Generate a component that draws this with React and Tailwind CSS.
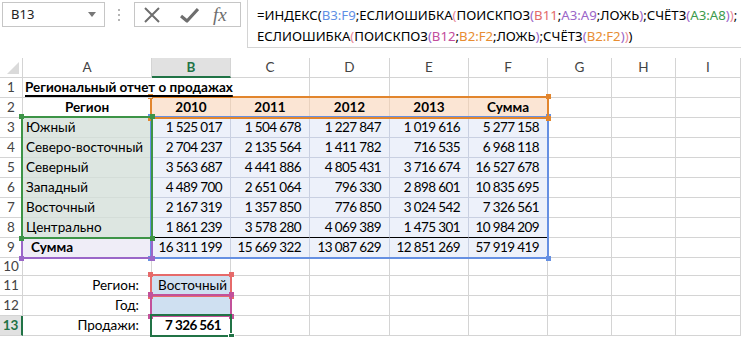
import React from "react";

// Excel 2013 style sheet with a formula being edited

const years = ["2010", "2011", "2012", "2013", "Сумма"];
const data = [
  ["Южный", "1 525 017", "1 504 678", "1 227 847", "1 019 616", "5 277 158"],
  ["Северо-восточный", "2 704 237", "2 135 564", "1 411 782", "716 535", "6 968 118"],
  ["Северный", "3 563 687", "4 441 886", "4 805 431", "3 716 674", "16 527 678"],
  ["Западный", "4 489 700", "2 651 064", "796 330", "2 898 601", "10 835 695"],
  ["Восточный", "2 167 319", "1 357 850", "776 850", "3 024 542", "7 326 561"],
  ["Центрально", "1 861 239", "3 578 280", "4 069 389", "1 475 301", "10 984 209"],
];
const totals = ["16 311 199", "15 669 322", "13 087 629", "12 851 269", "57 919 419"];
const letters = ["A", "B", "C", "D", "E", "F", "G", "H", "I"];

const grid = "border-r border-b border-[#d4d4d4]";

function Cell({ children, className = "" }) {
  return (
    <div className={`flex items-center whitespace-nowrap ${className}`}>{children}</div>
  );
}

function RowHead({ n, active }) {
  if (active)
    return (
      <div className="flex items-center justify-center border-b border-[#d4d4d4] border-r-2 border-r-[#217346] bg-[#e1e1e1] font-bold text-[#217346]">
        {n}
      </div>
    );
  return (
    <div className={`flex items-center justify-center ${grid} text-[#444]`}>{n}</div>
  );
}

function Empty({ n = 3 }) {
  return Array.from({ length: n }).map((_, i) => <Cell key={i} className={grid} />);
}

function Handles({ color }) {
  return (
    <>
      <span className={`absolute -left-[4px] -top-[4px] h-[5px] w-[5px] ${color}`} />
      <span className={`absolute -right-[4px] -top-[4px] h-[5px] w-[5px] ${color}`} />
      <span className={`absolute -left-[4px] -bottom-[4px] h-[5px] w-[5px] ${color}`} />
      <span className={`absolute -right-[4px] -bottom-[4px] h-[5px] w-[5px] ${color}`} />
    </>
  );
}

function Formula() {
  const k = "text-black";
  const P = ({ c, t }) => <span className={c}>{t}</span>;
  const blue = "text-[#5f8fe4]";
  const red = "text-[#e36a6a]";
  const purple = "text-[#9a66c8]";
  const green = "text-[#3b9a4b]";
  const mag = "text-[#c24d9c]";
  const orange = "text-[#e88d32]";
  const pink = "text-[#e8899a]";
  return (
    <div className="font-['Noto_Sans',sans-serif] text-[13.2px] leading-[21px] text-black">
      <div>
        <P c={k} t="=ИНДЕКС(" />
        <P c={blue} t="B3:F9" />
        <P c={k} t=";ЕСЛИОШИБКА" />
        <P c={pink} t="(" />
        <P c={k} t="ПОИСКПОЗ" />
        <P c={purple} t="(" />
        <P c={red} t="B11" />
        <P c={k} t=";" />
        <P c={purple} t="A3:A9" />
        <P c={k} t=";ЛОЖЬ" />
        <P c={purple} t=")" />
        <P c={k} t=";СЧЁТЗ" />
        <P c={purple} t="(" />
        <P c={green} t="A3:A8" />
        <P c={purple} t=")" />
        <P c={pink} t=")" />
        <P c={k} t=";" />
      </div>
      <div>
        <P c={k} t="ЕСЛИОШИБКА" />
        <P c={pink} t="(" />
        <P c={k} t="ПОИСКПОЗ" />
        <P c={purple} t="(" />
        <P c={mag} t="B12" />
        <P c={k} t=";" />
        <P c={orange} t="B2:F2" />
        <P c={k} t=";ЛОЖЬ" />
        <P c={purple} t=")" />
        <P c={k} t=";СЧЁТЗ" />
        <P c={purple} t="(" />
        <P c={orange} t="B2:F2" />
        <P c={purple} t=")" />
        <P c={pink} t=")" />
        <P c={k} t=")" />
      </div>
    </div>
  );
}

export default function App() {
  const num = "justify-end pr-[8px] tracking-[-0.6px]";
  const blueCell = "border-r border-b border-[#c9d0e1] bg-[#edf1fa]";
  return (
    <div className="h-[337px] w-[741px] overflow-hidden bg-white font-['Lato',sans-serif] text-[13.5px] text-black">
      {/* formula bar */}
      <div className="flex h-[58px] items-start">
        <div className="ml-[2px] mt-[2px] flex h-[25px] w-[103px] items-center justify-between border border-[#c6c6c6] pl-[8px] pr-[8px] font-['Noto_Sans',sans-serif] text-[13px] text-[#222]">
          B13
          <svg width="8" height="5" viewBox="0 0 8 5">
            <path d="M0 0h8L4 5z" fill="#777" />
          </svg>
        </div>
        <div className="ml-[13px] mt-[9px] flex flex-col gap-[3px]">
          <span className="h-[2px] w-[2px] bg-[#b5b5b5]" />
          <span className="h-[2px] w-[2px] bg-[#b5b5b5]" />
          <span className="h-[2px] w-[2px] bg-[#b5b5b5]" />
        </div>
        <div className="ml-[14px] mt-[2px] flex h-[25px] w-[107px] items-center border border-[#c6c6c6] pl-[8px]">
          <svg width="18" height="16" viewBox="0 0 18 16">
            <path d="M2 1l14 14M16 1L2 15" stroke="#6e6e6e" strokeWidth="2" />
          </svg>
          <svg className="ml-[19px]" width="19" height="16" viewBox="0 0 19 16">
            <path d="M1 9l6 5L18 2" stroke="#6e6e6e" strokeWidth="3.2" fill="none" strokeLinejoin="round" />
          </svg>
          <span className="ml-[14px] font-['Liberation_Serif',serif] text-[19px] italic leading-none text-[#6e6e6e]">
            fx
          </span>
        </div>
        <div className="ml-[6px] h-[48px] flex-1 border-b border-l border-[#d4d4d4] pl-[9px] pt-[5px]">
          <Formula />
        </div>
      </div>

      {/* sheet */}
      <div className="relative grid grid-cols-[23px_129px_79px_79px_80px_79px_79px_64px_64px_65px] grid-rows-[repeat(10,20px)_18px_repeat(3,20px)]">
        {/* column headers */}
        <div className={`relative ${grid}`}>
          <svg className="absolute bottom-[3px] right-[3px]" width="12" height="12" viewBox="0 0 12 12">
            <path d="M12 0v12H0z" fill="#dadada" />
          </svg>
        </div>
        {letters.map((l) =>
          l === "B" ? (
            <div
              key={l}
              className="flex items-center justify-center border-r border-[#d4d4d4] border-b-2 border-b-[#217346] bg-[#e1e1e1] font-bold text-[#217346]"
            >
              {l}
            </div>
          ) : (
            <div key={l} className={`flex items-center justify-center ${grid} text-[#444]`}>
              {l}
            </div>
          )
        )}

        {/* row 1 */}
        <RowHead n={1} />
        <Cell className="relative z-10 border-b border-[#d4d4d4] pl-[2px] font-bold underline decoration-[1.5px] underline-offset-[3px]">
          Региональный отчет о продажах
        </Cell>
        <Cell className="border-b border-[#d4d4d4]" />
        <Empty n={7} />

        {/* row 2 */}
        <RowHead n={2} />
        <Cell className={`justify-center font-bold ${grid}`}>Регион</Cell>
        {years.map((y) => (
          <Cell key={y} className="justify-center border-r border-b border-[#e9d2bf] bg-[#fbe5d4] font-bold">
            {y}
          </Cell>
        ))}
        <Empty n={3} />

        {/* rows 3-8 */}
        {data.map((r, i) => (
          <React.Fragment key={r[0]}>
            <RowHead n={i + 3} />
            <Cell className="border-r border-b border-[#d4ddd8] bg-[#dde6e1] pl-[3px]">{r[0]}</Cell>
            {r.slice(1).map((v, j) => (
              <Cell
                key={j}
                className={
                  i === 5
                    ? `${num} border-r border-b border-[#c9d0e1] border-b-black bg-[#edf1fa]`
                    : `${num} ${blueCell}`
                }
              >
                {v}
              </Cell>
            ))}
            <Empty n={3} />
          </React.Fragment>
        ))}

        {/* row 9 */}
        <RowHead n={9} />
        <Cell className="border-r border-b border-[#d6d3e4] bg-[#efedf7] pl-[8px] font-bold">Сумма</Cell>
        {totals.map((v) => (
          <Cell key={v} className={`${num} ${blueCell}`}>
            {v}
          </Cell>
        ))}
        <Empty n={3} />

        {/* row 10 */}
        <RowHead n={10} />
        <Empty n={9} />

        {/* rows 11-13 */}
        <RowHead n={11} />
        <Cell className={`justify-end pr-[12px] ${grid}`}>Регион:</Cell>
        <Cell className={`bg-[#cfe0f1] pl-[6px] ${grid}`}>Восточный</Cell>
        <Empty n={7} />

        <RowHead n={12} />
        <Cell className={`justify-end pr-[12px] ${grid}`}>Год:</Cell>
        <Cell className={`bg-[#cfe0f1] ${grid}`} />
        <Empty n={7} />

        <RowHead n={13} active />
        <Cell className={`justify-end pr-[12px] ${grid}`}>Продажи:</Cell>
        <Cell className={`justify-end pr-[9px] font-bold tracking-[-0.6px] ${grid}`}>7 326 561</Cell>
        <Empty n={7} />

        {/* range highlights of the formula being edited */}
        <div className="pointer-events-none absolute left-[150px] top-[58px] h-[143px] w-[399px] border-2 border-[#6690e2]">
          <Handles color="bg-[#6690e2]" />
        </div>
        <div className="pointer-events-none absolute left-[150px] top-[38px] h-[23px] w-[399px] border-2 border-[#e2852d]">
          <Handles color="bg-[#e2852d]" />
        </div>
        <div className="pointer-events-none absolute left-[21px] top-[58px] h-[143px] w-[132px] border-2 border-[#9a66c8]">
          <Handles color="bg-[#9a66c8]" />
        </div>
        <div className="pointer-events-none absolute left-[21px] top-[58px] h-[123px] w-[132px] border-2 border-[#3d9447]">
          <Handles color="bg-[#3d9447]" />
        </div>
        <div className="pointer-events-none absolute left-[150px] top-[216px] h-[23px] w-[82px] border-2 border-[#e66a6a]">
          <Handles color="bg-[#e66a6a]" />
        </div>
        <div className="pointer-events-none absolute left-[150px] top-[236px] h-[23px] w-[82px] border-2 border-[#c2519a]">
          <Handles color="bg-[#c2519a]" />
        </div>
        <div className="pointer-events-none absolute left-[150px] top-[256px] h-[23px] w-[82px] border-2 border-[#217346]">
          <span className="absolute -bottom-[5px] -right-[5px] h-[7px] w-[7px] border border-white bg-[#217346]" />
        </div>
      </div>
    </div>
  );
}
